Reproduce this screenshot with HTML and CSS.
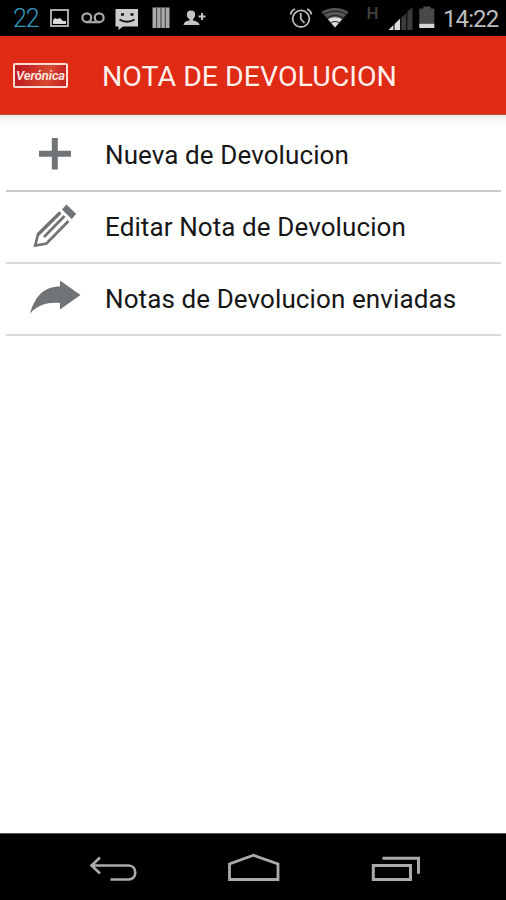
FILE: index.html
```
<!DOCTYPE html>
<html lang="es">
<head>
<meta charset="utf-8">
<title>Nota de Devolucion</title>
<link rel="stylesheet" href="styles.css">
</head>
<body>
<div class="screen">
  <header class="status">
    <div class="group">
      <span class="count">22</span>
      <svg width="19" height="36" viewBox="50 0 19 36"><rect x="51" y="10" width="17" height="16" fill="none" stroke="#aaa" stroke-width="2"/><path d="M53 24v-4l2-2 2 1 3-1 3 3h3v3z" fill="#d8d8d8"/></svg>
      <svg class="voicemail" width="24" height="36" viewBox="81.500 0 24 36"><g fill="none" stroke="#aaa" stroke-width="2.200"><circle cx="87.300" cy="17.700" r="4.400"/><circle cx="99.700" cy="17.700" r="4.400"/><path d="M87 22.200h13"/></g></svg>
      <svg class="message" width="24" height="36" viewBox="115 0 24 36"><path d="M115.500 9h22.500v17.500h-15L118.500 30v-3.500h-3z" fill="#ccc"/><path d="M119.500 19.500c4 3 11 3 15 0" fill="none" stroke="#151515" stroke-width="1.800"/><path d="M121 14.500h3M130.500 14.500h3" stroke="#151515" stroke-width="2.500"/></svg>
      <svg class="bars" width="18" height="36" viewBox="151.500 0 18 36"><path d="M152 7.500h17v20.500h-17z" fill="#aaa"/><path d="M156.200 8v20M160.500 8v20M164.800 8v20" stroke="#3c3c3c"/></svg>
      <svg class="contact" width="24" height="36" viewBox="183 0 24 36"><path d="M191 10.500c3 0 4.500 2 4.200 4.500-.3 2-1.200 3.500-2.200 4.300v1.200c3.500.7 6 1.500 6.500 4.500h-16c.5-3 2.500-4 6-4.500v-1.200c-1.500-.8-2.500-2.300-2.700-4.300-.2-2.500 1.200-4.500 4.200-4.500z" fill="#c4c4c4"/><path d="M202 13v7M198.500 16.500h7" stroke="#c4c4c4" stroke-width="2"/></svg>
    </div>
    <div class="group">
      <svg width="24" height="36" viewBox="289 0 24 36"><g fill="none" stroke="#bbb" stroke-width="1.800"><circle cx="301" cy="18.700" r="8.300"/><path d="M300.800 13v6l3.700 4M290.500 14.500c.5-2.500 2-4.500 4.500-5.500M311.500 14.500c-.5-2.500-2-4.500-4.500-5.500"/></g></svg>
      <svg class="wifi" width="28" height="36" viewBox="320.500 0 28 36"><path d="M321 12c7.500-5.300 19.500-5.300 27 0L334.500 27.500z" fill="#555"/><path d="M327.500 19.300c4-2.700 10-2.700 14 0l-7 8.200z" fill="#ddd"/><path d="M323 14.500c7-4.500 16-4.500 23 0M326 18.200c5-3.500 12-3.500 17 0M330 22.700c3-1.500 6-1.500 9 0" fill="none" stroke="#111" stroke-width=".9"/></svg>
      <span class="network">H</span>
      <svg width="25" height="36" viewBox="387.500 0 25 36"><path d="M412 7v23h-24z" fill="#3b3b3b"/><path d="M399.500 18.700V30H388z" fill="#ddd"/><path d="M393.500 23v7M400.200 16v14M406.200 10v20" stroke="#050505" stroke-width="1.100"/></svg>
      <svg class="battery" width="16" height="36" viewBox="419 0 16 36"><path d="M419.300 8.500h4v-2h7.500v2h3.500V28h-15z" fill="#494949"/><path d="M419.300 23.800h15V28h-15z" fill="#d5d5d5"/></svg>
      <time class="clock">14:22</time>
    </div>
  </header>
  <div class="appbar">
    <div class="logo"><span>Verónica</span></div>
    <h1>NOTA DE DEVOLUCION</h1>
  </div>
  <main>
    <ul class="menu">
      <li class="item">
        <svg width="60" height="60" viewBox="25 125 60 60"><path d="M54.800 138v31.500M39 153.800h32" stroke="#717477" stroke-width="6"/></svg>
        <span class="label">Nueva de Devolucion</span>
      </li>
      <li class="item">
        <svg width="60" height="60" viewBox="25 197 60 60"><path d="M66.500 204.500l9.700 9.500-4.500 5-9.700-9.500z" fill="#717477"/><path d="M60.300 212.500L38 234.500 35.200 245.500 46.500 243.500 68.500 221M64.500 216L44 237" fill="none" stroke="#717477" stroke-width="2.700"/><path d="M60.300 212.500L38 234.500" stroke="#717477" stroke-width="3.200"/></svg>
        <span class="label">Editar Nota de Devolucion</span>
      </li>
      <li class="item">
        <svg width="60" height="60" viewBox="25 269 60 60"><path d="M30 313.500C35 296 44 286.500 60 286.500v-6L80.500 295 60 309.500v-6.500c-13-.8-22 2-30 10.500z" fill="#717477"/></svg>
        <span class="label">Notas de Devolucion enviadas</span>
      </li>
    </ul>
  </main>
  <nav class="navbar">
    <svg width="50" height="66" viewBox="88 834 50 66"><path d="M100 857.500l-8.500 8 8.500 8M92 865.500h36.500c9 0 9 14 0 14H110.500" fill="none" stroke="#aaa" stroke-width="2.600"/></svg>
    <svg width="54" height="66" viewBox="228 834 54 66"><path d="M229.500 879.500v-15.500l24-8.700 24.500 8.700v15.500z" fill="none" stroke="#aaa" stroke-width="2.800"/></svg>
    <svg width="50" height="66" viewBox="371 834 50 66"><path d="M373.300 865.500h37.200v14h-37.200zM382.500 858.300h36v15.500" fill="none" stroke="#aaa" stroke-width="3"/></svg>
  </nav>
</div>
</body>
</html>
```

FILE: styles.css
```
* { box-sizing: border-box; }
body { margin: 0; background: #fff; font-family: Roboto, "Liberation Sans", sans-serif; }
svg { display: block; flex: none; }

.screen { width: 506px; height: 900px; display: flex; flex-direction: column; overflow: hidden; }

.status { height: 36px; background: #000; display: flex; justify-content: space-between; padding: 0 7px 0 13px; flex: none; }
.group { display: flex; line-height: 36px; }
.count { width: 37px; color: #3499bd; font-size: 25px; font-weight: 300; letter-spacing: -1.2px; line-height: 37px; }
.voicemail { margin-left: 12px; }
.message { margin-left: 10px; }
.bars { margin-left: 12.500px; }
.contact { margin-left: 13.500px; }
.wifi { margin-left: 7.500px; }
.network { width: 39px; padding-left: 18px; color: #414141; font-size: 17px; font-weight: 500; line-height: 27px; }
.battery { margin-left: 6.500px; }
.clock { width: 56px; margin-left: 8px; color: #bcbcbc; font-size: 24px; letter-spacing: -0.9px; line-height: 38px; white-space: nowrap; }

.appbar { height: 79px; flex: none; display: flex; align-items: center; padding: 1px 13px 0; background: #df2a14; border-bottom: 1px solid #b94b3d; }
.logo { width: 55px; height: 25px; display: flex; align-items: center; justify-content: center; background: linear-gradient(100deg, #bb1720, #d84930 65%, #c41d22); border: 2px solid #ffdcd5; border-radius: 2px; color: #ffe8e3; font-size: 13px; font-weight: 600; font-style: italic; letter-spacing: -0.1px; line-height: 20px; }
h1 { margin: 3px 0 0 34px; color: #fff0ec; font-size: 28.500px; font-weight: 400; letter-spacing: 0; white-space: nowrap; line-height: 36px; }

main { flex: 1; padding: 0 5px; background: linear-gradient(#e9e8e6, #f8f8f7 5px, #fff 13px); }
.menu { margin: 0; padding: 5px 0 0; list-style: none; }
.item { height: 72px; display: flex; align-items: center; padding-left: 19px; border-bottom: 2px solid #c8c8c8; margin: 0 0 0 1px; }
.item:not(:first-child) { border-color: #d9d9d9; }
.label { margin: -1px 0 0 20px; color: #161616; font-size: 26px; letter-spacing: 0.1px; line-height: 34px; white-space: nowrap; }

.navbar { height: 67px; flex: none; display: flex; justify-content: space-between; padding: 0 85px 0 88px; background: #000; border-top: 1px solid #555; }
```
